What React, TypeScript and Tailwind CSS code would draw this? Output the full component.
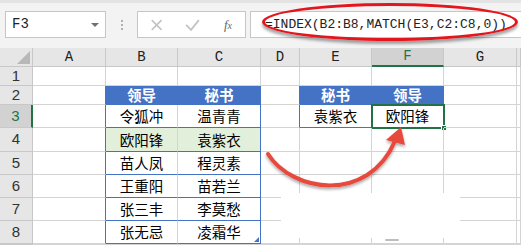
import React from "react";

const colW = [33, 73, 72, 83, 39, 72, 72, 73];
const cols = ["", "A", "B", "C", "D", "E", "F", "G", ""];
const rowH = [19, 19, 23, 24, 23, 23, 23, 23];

const cjk = { fontFamily: '"Noto Sans CJK SC", "Noto Sans", sans-serif' };
const mono = { fontFamily: '"Liberation Mono", "DejaVu Sans Mono", monospace' };

type CellData = { text?: string; kind?: "head" | "body" | "green" };

function tableCell(r: number, c: number): CellData {
  // r: 1..9, c: 1..8 (A..H)
  const left: Record<number, string[]> = {
    2: ["领导", "秘书"],
    3: ["令狐冲", "温青青"],
    4: ["欧阳锋", "袁紫衣"],
    5: ["苗人凤", "程灵素"],
    6: ["王重阳", "苗若兰"],
    7: ["张三丰", "李莫愁"],
    8: ["张无忌", "凌霜华"],
  };
  if ((c === 2 || c === 3) && left[r]) {
    return {
      text: left[r][c - 2],
      kind: r === 2 ? "head" : r === 4 ? "green" : "body",
    };
  }
  if (r === 2 && c === 5) return { text: "秘书", kind: "head" };
  if (r === 2 && c === 6) return { text: "领导", kind: "head" };
  if (r === 3 && c === 5) return { text: "袁紫衣", kind: "body" };
  if (r === 3 && c === 6) return { text: "欧阳锋", kind: "body" };
  return {};
}

function Cell({ r, c }: { r: number; c: number }) {
  const d = tableCell(r, c);
  let cls = "relative flex items-center justify-center border-r border-b border-[#d4d4d4] text-[14.5px] text-black";
  const inBC = c === 2 || c === 3;
  const inEF = c === 5 || c === 6;
  // right borders blue for table edges
  if (c === 1 && r >= 2 && r <= 8) cls = cls.replace("border-[#d4d4d4]", "border-b-[#d4d4d4] border-r-[#4472c4]");
  if (d.kind === "head") {
    cls += " bg-[#4472c4] text-white font-bold border-r-[#4472c4] border-b-[#4472c4]";
  }
  if (inBC && r >= 3 && r <= 8) {
    cls += " !border-b-[#4472c4]";
    if (c === 3) cls += " !border-r-[#4472c4]";
  }
  if (d.kind === "green") cls += " bg-[#e2efda]";
  if (c === 4 && (r === 2 || r === 3)) cls += " !border-r-[#4472c4]";
  if (inEF && r === 3 && c === 5) cls += " !border-b-[#4472c4]";
  return (
    <div className={cls} style={cjk}>
      {d.text}
      {r === 3 && c === 6 && (
        <div className="absolute -left-[1px] -top-[1px] w-[74px] h-[25px] border-2 border-[#217346]">
          <div className="absolute -right-[4px] -bottom-[4px] w-[6px] h-[6px] bg-[#217346] border border-white" />
        </div>
      )}
      {r === 8 && c === 3 && (
        <div
          className="absolute right-[1px] bottom-[1px] w-0 h-0 border-l-[5px] border-l-transparent border-b-[5px] border-b-[#4472c4]"
        />
      )}
    </div>
  );
}

export default function App() {
  const rows = [1, 2, 3, 4, 5, 6, 7, 8, 9];
  return (
    <div className="relative w-[521px] h-[250px] overflow-hidden bg-white">
      {/* formula bar */}
      <div className="h-[48px] bg-[#f3f3f3] border-t-[3px] border-[#e3e3e3] flex items-start pt-[8px] pl-[5px]">
        <div className="w-[101px] h-[27px] bg-white border border-[#c6c6c6] flex items-center justify-between pl-[6px] pr-[6px]">
          <span className="text-[14px] text-[#222]" style={mono}>F3</span>
          <span className="w-0 h-0 border-l-[4px] border-r-[4px] border-t-[4px] border-l-transparent border-r-transparent border-t-[#707070]" />
        </div>
        <div className="w-[31px] h-[27px] flex flex-col items-center justify-center gap-[2px]">
          <span className="w-[2px] h-[2px] bg-[#b0b0b0]" />
          <span className="w-[2px] h-[2px] bg-[#b0b0b0]" />
          <span className="w-[2px] h-[2px] bg-[#b0b0b0]" />
        </div>
        <div className="w-[109px] h-[27px] bg-white border border-[#c6c6c6] flex items-center">
          <svg width="109" height="25" viewBox="0 0 109 25">
            <path d="M14 8 L24 18 M24 8 L14 18" stroke="#c3c3c3" strokeWidth="1.6" />
            <path d="M49 13 L54 18 L62 8" stroke="#c3c3c3" strokeWidth="1.8" fill="none" />
          </svg>
        </div>
        <div className="absolute left-[218px] top-[11px] h-[27px] w-[20px] flex items-center justify-center">
          <span className="text-[13px] italic text-[#666]" style={{ fontFamily: '"Liberation Serif", serif' }}>
            f<span className="text-[10px]">x</span>
          </span>
        </div>
        <div className="ml-[4px] flex-1 h-[27px] bg-white border-y border-l border-[#c6c6c6] flex items-center pl-[14px]">
          <span className="text-[13px] text-[#222] whitespace-nowrap" style={mono}>
            =INDEX(B2:B8,MATCH(E3,C2:C8,0))
          </span>
        </div>
      </div>

      {/* grid */}
      <div
        className="grid"
        style={{
          gridTemplateColumns: colW.map((w) => w + "px").join(" ") + " 1fr",
          gridTemplateRows: "19px " + rowH.map((h) => h + "px").join(" ") + " 1fr",
        }}
      >
        {cols.map((l, i) =>
          i === 0 ? (
            <div key="corner" className="relative bg-[#e6e6e6] border-r border-b border-[#c8c8c8]">
              <div className="absolute right-[2px] bottom-[2px] w-0 h-0 border-l-[13px] border-l-transparent border-b-[13px] border-b-[#b8b8b8]" />
            </div>
          ) : (
            <div
              key={"h" + i}
              className={
                "flex items-center justify-center text-[14px] border-r border-[#c8c8c8] " +
                (l === "F"
                  ? "bg-[#d2d2d2] text-[#217346] border-b-2 border-b-[#217346]"
                  : "bg-[#e6e6e6] text-[#222] border-b border-b-[#c8c8c8]")
              }
              style={mono}
            >
              {l}
            </div>
          )
        )}
        {rows.map((r) => (
          <React.Fragment key={r}>
            <div
              className={
                "flex items-center justify-center text-[15px] border-b border-[#c8c8c8] " +
                (r === 3
                  ? "bg-[#d2d2d2] text-[#217346] border-r-2 border-r-[#217346]"
                  : "bg-[#e6e6e6] text-[#333] border-r border-r-[#c8c8c8]")
              }
              style={{ fontFamily: '"Liberation Sans", Arial, sans-serif' }}
            >
              {r === 9 ? "" : r}
            </div>
            {[1, 2, 3, 4, 5, 6, 7, 8].map((c) => (
              <Cell key={c} r={r} c={c} />
            ))}
          </React.Fragment>
        ))}
      </div>

      {/* white patch */}
      <div className="absolute left-[281px] top-[193px] w-[179px] h-[45px] bg-white" />
      <div className="absolute left-[385px] top-[239px] w-[14px] h-[2px] rounded-full bg-[#bdbdbd] blur-[0.6px]" />

      {/* red ellipse */}
      <div className="absolute left-[262px] top-[3px] w-[256px] h-[38px] rounded-[50%] border-[3px] border-[#e3161d] shadow-[0_3px_3px_rgba(0,0,0,0.35)]" />

      {/* red arrow */}
      <svg className="absolute left-0 top-0 pointer-events-none" width="521" height="250" viewBox="0 0 521 250">
        <defs>
          <filter id="sh" x="-20%" y="-20%" width="140%" height="140%">
            <feDropShadow dx="0" dy="2" stdDeviation="1.5" floodColor="#000" floodOpacity="0.35" />
          </filter>
        </defs>
        <g filter="url(#sh)">
          <path d="M268 154 C 292 192, 368 204, 395 141" stroke="#e8483c" strokeWidth="4" fill="none" strokeLinecap="round" />
          <path d="M401 127 L386 140 L405 145 Z" fill="#e8483c" />
        </g>
      </svg>
    </div>
  );
}
